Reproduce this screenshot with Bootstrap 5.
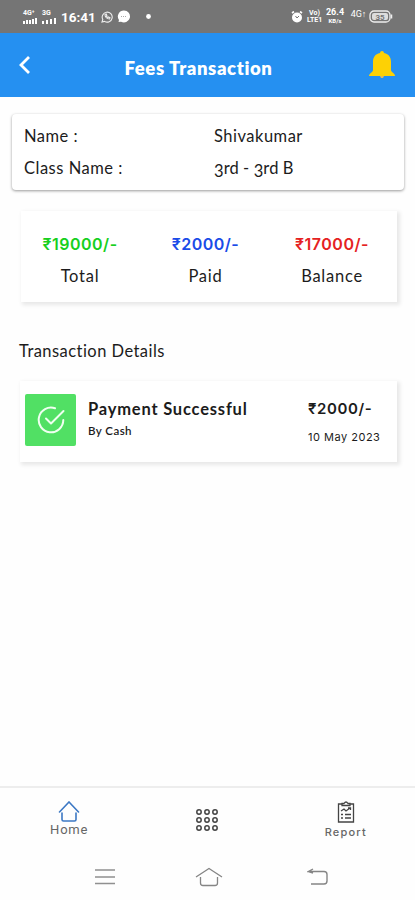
<!DOCTYPE html>
<html lang="en">
<head>
<meta charset="utf-8">
<meta name="viewport" content="width=device-width, initial-scale=1">
<title>Fees Transaction</title>
<link href="https://cdn.jsdelivr.net/npm/bootstrap@5.3.0/dist/css/bootstrap.min.css" rel="stylesheet">
<style>
body{font-family:Lato,"Open Sans",sans-serif;color:#1c1c1c;background:#fefefe;height:900px;overflow:hidden;font-size:16.5px;line-height:20px}
svg{display:block;flex:none}
.num{font-family:Inter,sans-serif}
.statusbar{height:33px;background:#757575;color:#fff;padding:0 22px 0 23px;font-family:Roboto,sans-serif}
.sig{font-size:7px;line-height:7px;font-weight:700;width:15px}
.sig svg{margin-top:1px}
.clock{font-size:13.500px;font-weight:700;letter-spacing:0;width:36px;margin-left:4px}
.tiny{font-size:7px;line-height:7px;font-weight:700;text-align:center}
.apphead{height:64px;background:#2590f1;color:#fff;padding:0 20px 0 18px}
.apphead h1{font-size:18.500px;font-weight:800;line-height:24px;letter-spacing:.6px;padding-top:5px;margin-right:16px!important}
.info{margin:17px 11px 0 12px;height:76px;padding:12px 12px;border-radius:4px;box-shadow:0 1px 3px rgba(0,0,0,.4);background:#fff;display:grid;grid-template-columns:190px 1fr;row-gap:12px;letter-spacing:.5px}
.grade{letter-spacing:.1px}
.old{display:inline-block;transform:translateY(3px)}
.panel{background:#fff;box-shadow:2px 2px 4px 1px rgba(0,0,0,.09)}
.totals{margin:21px 18px 0 21px;height:91px;padding:23px 3px 0 0}
.totals .num{font-size:16px;font-weight:600;letter-spacing:.5px}
.totals .lbl{margin-top:12px;letter-spacing:.75px}
.green{color:#17cf20}.blue{color:#1a4be8}.red{color:#e52222}
.section{margin:39px 0 0 19px;letter-spacing:.45px}
.entry{margin:20px 18px 0 20px;height:81px;padding:13px 0 0 5px}
.okbox{width:51px;height:52px;background:#51e064;border-radius:2px}
.ttl{font-weight:700;letter-spacing:.8px;padding-top:5px}
.by{font-size:11.500px;line-height:14px;font-weight:600;letter-spacing:.45px;margin-top:5px}
.amt{font-size:15px;font-weight:600;letter-spacing:.6px;padding-top:5px}
.date{font-size:11px;line-height:14px;letter-spacing:.5px;margin-top:11px}
.tabs{border-top:2px solid #ededed;height:67px;font-family:Roboto,sans-serif;color:#666}
.tabs>div{width:138.33px}
.home{font-size:13px;line-height:15px;letter-spacing:.8px}
.rep{font-family:Inter,sans-serif;font-size:11px;line-height:14px;font-weight:500;letter-spacing:1.2px;margin-top:2px}
.sysbar{height:47px;padding:0 87px 0 95px}
</style>
</head>
<body class="d-flex flex-column">
<div class="statusbar d-flex align-items-center justify-content-between">
  <div class="d-flex align-items-center">
    <div class="sig">4G⁺<svg width="14" height="6" viewBox="0 0 14 6" fill="#fff"><path d="M0 3h2v3H0zM3 2h2v4H3zM6 2h2v4H6zM9 1h2v5H9zM12 0h2v6h-2z"/></svg></div>
    <div class="sig ms-1">3G<svg width="14" height="6" viewBox="0 0 14 6" fill="#fff"><path d="M0 3h2v3H0zM4 2h2v4H4zM8 1h2v5H8zM12 0h2v6h-2z"/></svg></div>
    <div class="clock">16:41</div>
    <svg class="ms-1" width="12" height="12" viewBox="0 0 12 12" fill="none" stroke="#eee" stroke-width="1.1"><path d="M1 11l.8-2.5A5 5 0 1 1 3.600 10.400zM4 3.500c0 2.500 2 4.500 4.500 4.500l.5-1.200-1.500-.8-.7.600L5.400 5.200l.5-.7-.7-1.500z"/></svg>
    <svg class="ms-1" width="14" height="13" viewBox="0 0 14 13"><path d="M7 .5a6 6 0 1 1-3 11.200L1.500 12l.5-2A6 6 0 0 1 7 .5z" fill="#fff"/><path d="M4 6.500h6" stroke="#aaa" stroke-dasharray="1 1"/></svg>
    <svg width="5" height="5" style="margin-left:15px"><circle cx="2.500" cy="2.500" r="2.400" fill="#fff"/></svg>
  </div>
  <div class="d-flex align-items-center">
    <svg width="12" height="12" viewBox="0 0 12 12"><circle cx="6" cy="6.500" r="5" fill="#fff"/><path d="M1 2l2-1.500M11 2L9 .5" stroke="#fff" stroke-width="1.600"/><path d="M4.500 5L6 7l2-2" fill="none" stroke="#757575"/></svg>
    <div class="tiny" style="margin-left:4px;width:15px">Vo)<br>LTE1</div>
    <div class="tiny" style="margin-left:3px;width:20px"><span style="font-size:9px">26.4</span><br><span style="font-size:6px">KB/s</span></div>
    <div class="tiny" style="margin-left:5px;width:17px;font-size:9px;font-weight:400;margin-bottom:5px">4G↑</div>
    <svg style="margin-left:2px" width="24" height="13" viewBox="0 0 24 13"><rect x="1" y="1" width="20" height="11" rx="4" fill="none" stroke="#eee" stroke-width="1.300"/><rect x="3" y="3" width="16" height="7" rx="2" fill="#ddd"/><path d="M22.500 4.500v4" stroke="#eee" stroke-width="1.500"/><text x="11" y="9.500" font-size="8" font-weight="700" fill="#757575" text-anchor="middle">35</text></svg>
  </div>
</div>
<header class="apphead d-flex align-items-center justify-content-between">
  <svg width="26" height="20" viewBox="0 0 26 20" fill="none" stroke="#fff" stroke-width="2.800"><path d="M11 2L3 10l8 8"/></svg>
  <h1 class="m-0">Fees Transaction</h1>
  <svg width="26" height="28" viewBox="0 0 26 28"><path d="M13 0a2 2 0 0 1 2 2c5 1 7 4.500 7 9v8c0 2.500 4 3 4 6H0c0-3 4-3.500 4-6v-8c0-4.500 2-8 7-9a2 2 0 0 1 2-2z" fill="#fdd105"/><path d="M11 25h4l-1 2h-2z" fill="#dfb95b"/></svg>
</header>
<section class="info">
  <div>Name :</div><div>Shivakumar</div>
  <div>Class Name :</div><div class="grade"><span class="old">3</span>rd - <span class="old">3</span>rd B</div>
</section>
<section class="totals panel d-flex text-center">
  <div style="width:118px"><div class="num green">₹19000/-</div><div class="lbl">Total</div></div>
  <div style="width:133px"><div class="num blue">₹2000/-</div><div class="lbl">Paid</div></div>
  <div style="width:120px"><div class="num red">₹17000/-</div><div class="lbl">Balance</div></div>
</section>
<div class="section">Transaction Details</div>
<section class="entry panel d-flex">
  <div class="okbox d-flex align-items-center justify-content-center"><svg width="28" height="28" viewBox="0 0 28 28" fill="none" stroke="#effff0" stroke-width="2" stroke-linecap="round" stroke-linejoin="round"><path d="M18 2.300A12.300 12.300 0 1 0 26.300 14"/><path d="M9 12.500l5 5L26.500 5"/></svg></div>
  <div style="width:220px;margin-left:12px"><div class="ttl">Payment Successful</div><div class="by">By Cash</div></div>
  <div><div class="num amt">₹2000/-</div><div class="num date">10 May 2023</div></div>
</section>
<nav class="tabs d-flex mt-auto">
  <div class="d-flex flex-column align-items-center" style="padding-top:13px"><svg width="22" height="21" viewBox="0 0 22 21" fill="none" stroke="#3c78c4" stroke-width="1.600" stroke-linecap="round"><path d="M1.500 11L11 1l9.500 10"/><path d="M4 12v6.500q0 1.500 1.500 1.500h11q1.500 0 1.500-1.500V12"/></svg><div class="home">Home</div></div>
  <div class="d-flex justify-content-center" style="padding-top:20px"><svg width="24" height="24" viewBox="0 0 24 24" fill="none" stroke="#444" stroke-width="1.500"><circle cx="4" cy="4" r="2.200"/><circle cx="12" cy="4" r="2.200"/><circle cx="20" cy="4" r="2.200"/><circle cx="4" cy="12" r="2.200"/><circle cx="12" cy="12" r="2.200"/><circle cx="20" cy="12" r="2.200"/><circle cx="4" cy="20" r="2.200"/><circle cx="12" cy="20" r="2.200"/><circle cx="20" cy="20" r="2.200"/></svg></div>
  <div class="d-flex flex-column align-items-center" style="padding-top:13px"><svg width="18" height="22" viewBox="0 0 18 22" fill="none" stroke="#444" stroke-width="1.300"><path d="M5 3H1.500v18h15V3H13M5 4.500v-2h2q2-3 4 0h2v2z"/><path d="M4 10l3-2 2 2 4-3M11 7h2.500v2M4 13.500h2M8 13.500h6M4 17h2M8 17h6"/></svg><div class="rep">Report</div></div>
</nav>
<footer class="sysbar d-flex align-items-center justify-content-between">
  <svg width="20" height="17" viewBox="0 0 20 17" stroke="#909090" stroke-width="1.400"><path d="M0 2h20M0 9h20M0 15.500h20"/></svg>
  <svg style="margin-right:5px" width="28" height="20" viewBox="0 0 28 20" fill="none" stroke="#858585" stroke-width="1.300"><path d="M1 10L14 1.500 27 10M5.500 10v6q0 2.500 2.500 2.500h12q2.500 0 2.500-2.500v-6"/></svg>
  <svg width="21" height="18" viewBox="0 0 21 18" fill="none" stroke="#858585" stroke-width="1.400"><path d="M6 1L1.500 3.500H17q3 0 3 3V13q0 3-3 3H4M1.500 3.500L6 5"/></svg>
</footer>
<script src="https://cdn.jsdelivr.net/npm/bootstrap@5.3.0/dist/js/bootstrap.bundle.min.js"></script>
</body>
</html>
